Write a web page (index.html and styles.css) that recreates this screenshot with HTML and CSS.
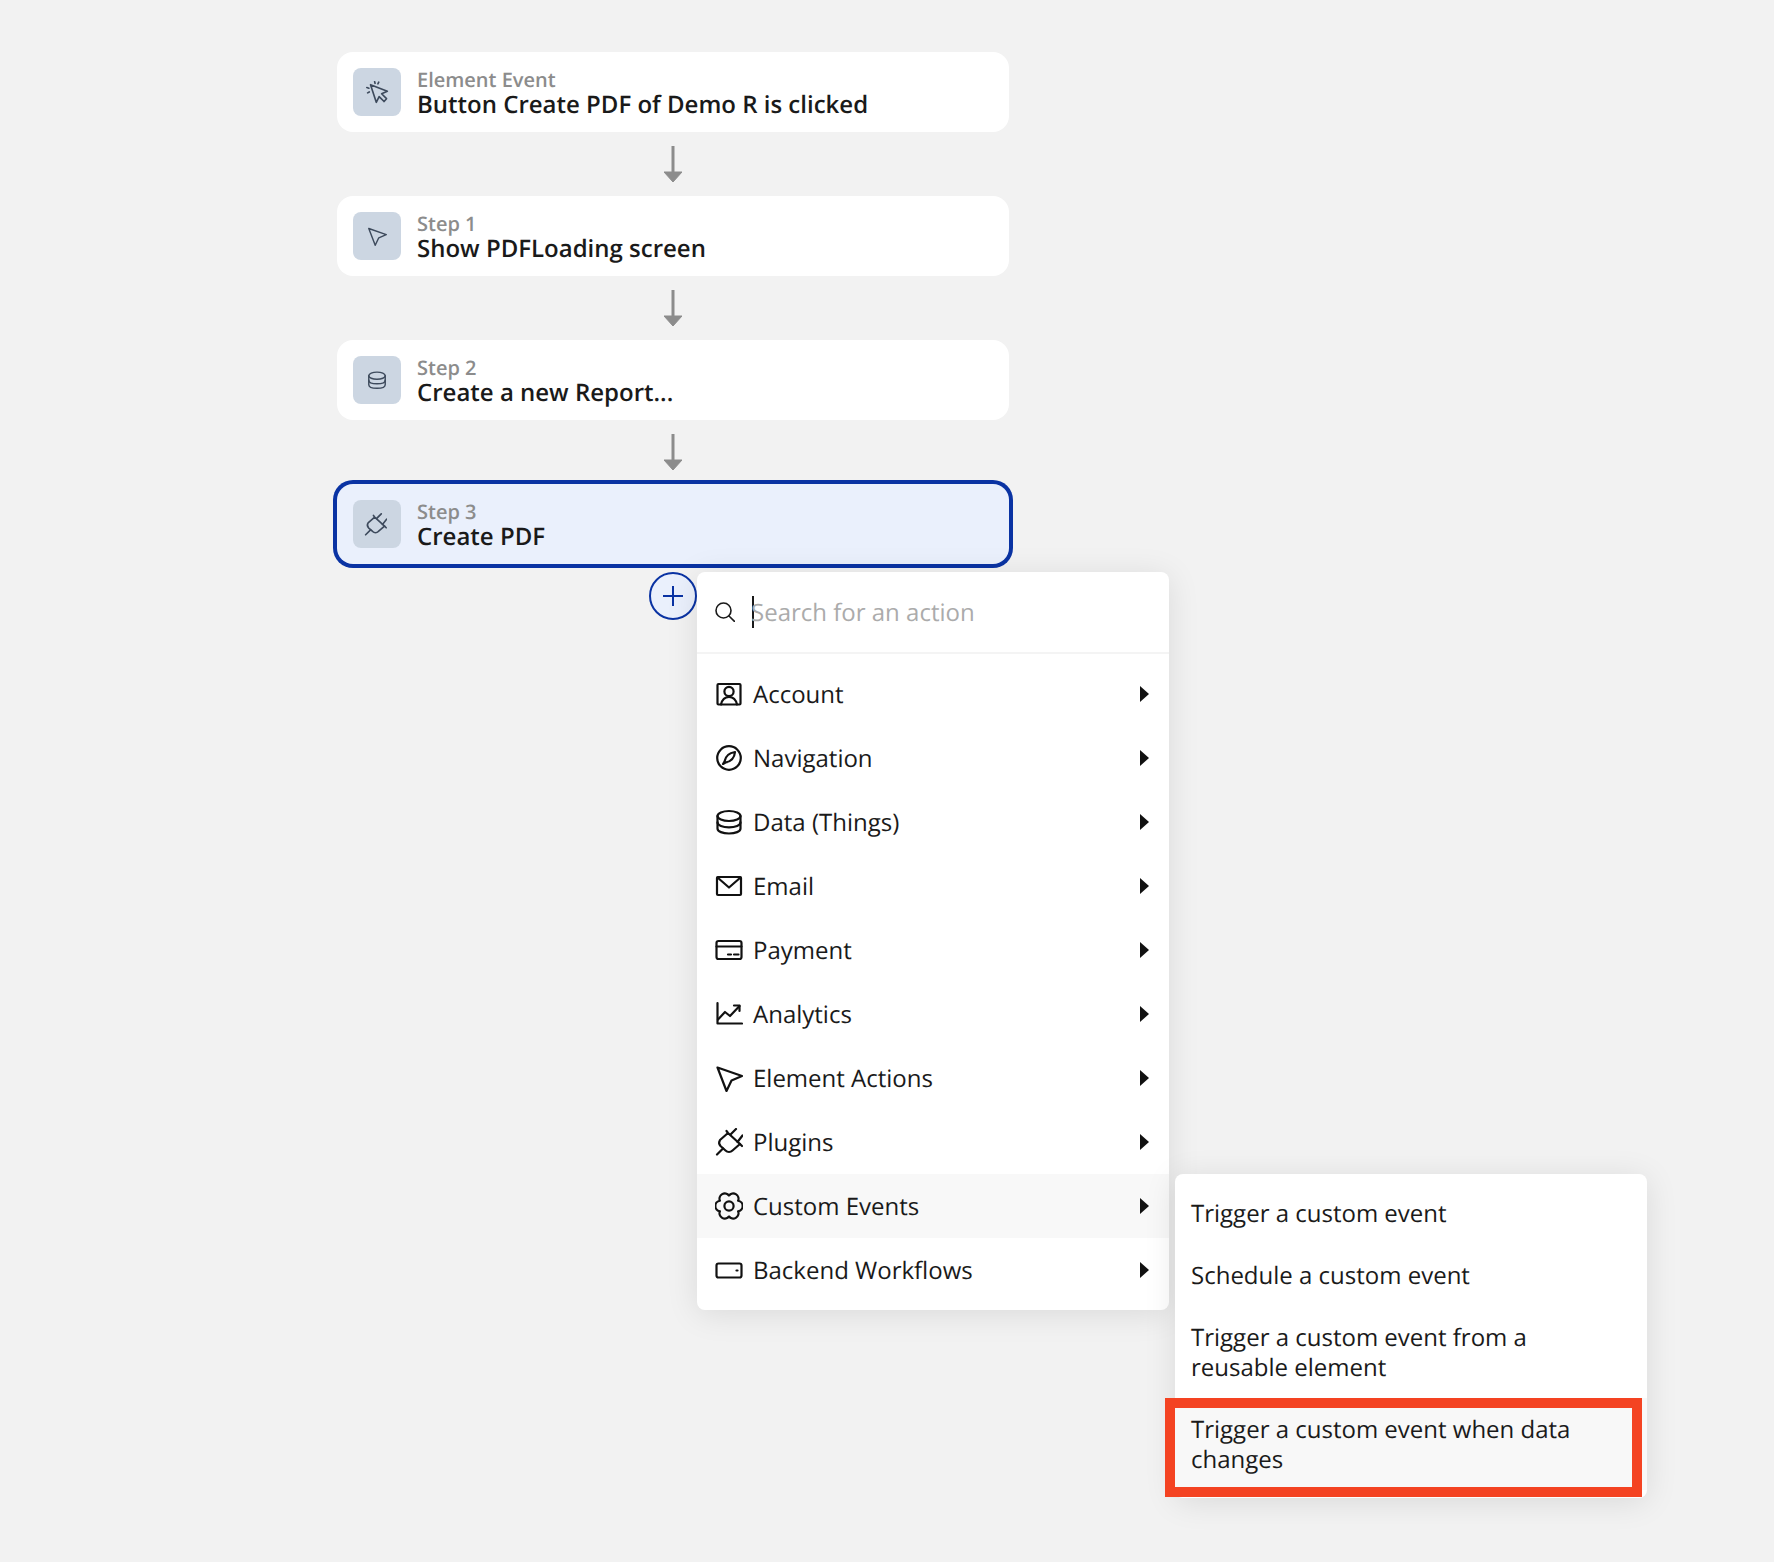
FILE: index.html
```html
<!DOCTYPE html>
<html lang="en">
<head>
<meta charset="utf-8">
<title>Workflow</title>
<link rel="stylesheet" href="styles.css">
</head>
<body>
<svg class="sprite" xmlns="http://www.w3.org/2000/svg">
  <symbol id="i-account" viewBox="0 0 28 28"><rect x="2.500" y="4" width="23" height="20.500" rx="1"/><circle cx="14" cy="11.500" r="4.600"/><path d="M6 24.500c1-4.500 4-7.500 8-7.500s7 3 8 7.500"/></symbol>
  <symbol id="i-nav" viewBox="0 0 28 28"><circle cx="14" cy="14" r="11.800"/><path d="M20 8c-5.500.8-9.500 4-10.500 9.500L8 20l2.500-1.500C16 17.500 19.500 13.500 20 8z"/></symbol>
  <symbol id="i-data" viewBox="0 0 28 28"><ellipse cx="14" cy="8" rx="11.500" ry="5"/><path d="M2.500 8v12.500c0 3 5.200 5 11.500 5s11.500-2 11.500-5V8"/><path d="M2.500 14.300c0 3 5.200 5 11.500 5s11.500-2 11.500-5"/></symbol>
  <symbol id="i-mail" viewBox="0 0 28 28"><rect x="2" y="5" width="24" height="18" rx="1"/><path d="M2.500 5.500L14 15.500 25.500 5.500"/></symbol>
  <symbol id="i-card" viewBox="0 0 28 28"><rect x="1.500" y="5" width="25" height="18" rx="2"/><path d="M1.500 10.500h25M13 18.500h3M19 18.500h4.500"/></symbol>
  <symbol id="i-chart" viewBox="0 0 28 28"><path d="M2.500 3v20.500H27"/><path d="M3 19.500l7-7.500 5 4 9.500-10"/><path d="M19 5.500h5.500V11"/></symbol>
  <symbol id="i-pointer" viewBox="0 0 28 28"><path d="M2.500 3.500L27 12l-10.500 4.500L11.500 27z"/></symbol>
  <symbol id="i-plug" viewBox="0 0 28 28"><path d="M11.500 3L13 5 25 16l-7.500 6.500a5 5 0 0 1-7 0L5.500 18a5 5 0 0 1-.5-6L13 5"/><path d="M15.500 6.500L21 1M22.500 14L27.500 7.500M25 16l2 2M8 20.500L2 26.500"/></symbol>
  <symbol id="i-gear" viewBox="0 0 28 28"><path d="M14 3.500A5.300 5.300 0 0 1 23.100 8.750 5.300 5.300 0 0 1 23.100 19.250 5.300 5.300 0 0 1 14 24.500 5.300 5.300 0 0 1 4.900 19.250 5.300 5.300 0 0 1 4.900 8.750 5.300 5.300 0 0 1 14 3.500z"/><circle cx="14" cy="14" r="4.600"/></symbol>
  <symbol id="i-backend" viewBox="0 0 28 28"><rect x="1.500" y="7.500" width="25" height="14" rx="2"/><path d="M21.500 14.500h1"/></symbol>
  <symbol id="i-click" viewBox="0 0 28 28"><path d="M5.500 4.500L26 12.500l-7 3 6 6-3 3.500-6-6L12.500 26z"/><path d="M10.500 .8l.5 2M15.500 1.500l-1 2M1 8l2.500.8M2 14.500l2-1.200"/></symbol>
</svg>

<main class="flow">
  <section class="card">
    <div class="tile"><svg class="tile-icon tile-icon-lg"><use href="#i-click"/></svg></div>
    <div class="card-text"><div class="card-label">Element Event</div><div class="card-title">Button Create PDF of Demo R is clicked</div></div>
  </section>
  <div class="connector"><svg class="arrow" viewBox="0 0 18 36"><path class="arrow-line" d="M9 0v28"/><path class="arrow-head" d="M0 26h18l-9 10z"/></svg></div>
  <section class="card">
    <div class="tile"><svg class="tile-icon"><use href="#i-pointer"/></svg></div>
    <div class="card-text"><div class="card-label">Step 1</div><div class="card-title">Show PDFLoading screen</div></div>
  </section>
  <div class="connector"><svg class="arrow" viewBox="0 0 18 36"><path class="arrow-line" d="M9 0v28"/><path class="arrow-head" d="M0 26h18l-9 10z"/></svg></div>
  <section class="card">
    <div class="tile"><svg class="tile-icon"><use href="#i-data"/></svg></div>
    <div class="card-text"><div class="card-label">Step 2</div><div class="card-title">Create a new Report...</div></div>
  </section>
  <div class="connector"><svg class="arrow" viewBox="0 0 18 36"><path class="arrow-line" d="M9 0v28"/><path class="arrow-head" d="M0 26h18l-9 10z"/></svg></div>
  <section class="card card-selected">
    <div class="tile"><svg class="tile-icon tile-icon-lg tile-icon-plug"><use href="#i-plug"/></svg></div>
    <div class="card-text"><div class="card-label">Step 3</div><div class="card-title">Create PDF</div></div>
  </section>
  <div class="add-row">
    <div class="add-button"><svg class="add-icon" viewBox="0 0 20 20"><path d="M10 0v20M0 10h20"/></svg></div>
  </div>
</main>

<div class="menu">
  <div class="search">
    <svg class="search-icon" viewBox="0 0 20 20"><circle cx="8.500" cy="8.500" r="7.500"/><path d="M14 14L19.500 19.500"/></svg>
    <span class="caret"></span>
    <span class="placeholder">Search for an action</span>
  </div>
  <ul class="menu-list">
    <li class="menu-item"><svg class="menu-icon"><use href="#i-account"/></svg><span class="menu-text">Account</span><span class="tri"></span></li>
    <li class="menu-item"><svg class="menu-icon"><use href="#i-nav"/></svg><span class="menu-text">Navigation</span><span class="tri"></span></li>
    <li class="menu-item"><svg class="menu-icon"><use href="#i-data"/></svg><span class="menu-text">Data (Things)</span><span class="tri"></span></li>
    <li class="menu-item"><svg class="menu-icon"><use href="#i-mail"/></svg><span class="menu-text">Email</span><span class="tri"></span></li>
    <li class="menu-item"><svg class="menu-icon"><use href="#i-card"/></svg><span class="menu-text">Payment</span><span class="tri"></span></li>
    <li class="menu-item"><svg class="menu-icon"><use href="#i-chart"/></svg><span class="menu-text">Analytics</span><span class="tri"></span></li>
    <li class="menu-item"><svg class="menu-icon"><use href="#i-pointer"/></svg><span class="menu-text">Element Actions</span><span class="tri"></span></li>
    <li class="menu-item"><svg class="menu-icon"><use href="#i-plug"/></svg><span class="menu-text">Plugins</span><span class="tri"></span></li>
    <li class="menu-item menu-item-active"><svg class="menu-icon"><use href="#i-gear"/></svg><span class="menu-text">Custom Events</span><span class="tri"></span></li>
    <li class="menu-item"><svg class="menu-icon"><use href="#i-backend"/></svg><span class="menu-text">Backend Workflows</span><span class="tri"></span></li>
  </ul>
</div>

<ul class="submenu">
  <li class="sub-item">Trigger a custom event</li>
  <li class="sub-item">Schedule a custom event</li>
  <li class="sub-item">Trigger a custom event from a reusable element</li>
  <li class="sub-item sub-item-marked">Trigger a custom event when data changes<span class="marker"></span></li>
</ul>
</body>
</html>
```
FILE: styles.css
```css
* { box-sizing: border-box; }
html, body { margin: 0; padding: 0; }
body {
  position: relative;
  width: 1774px;
  height: 1562px;
  overflow: hidden;
  background: #f2f2f2;
  font-family: "Open Sans", "Noto Sans", sans-serif;
  color: #1a1a1a;
  text-rendering: geometricPrecision;
}
.sprite { display: none; }

.flow {
  width: 672px;
  margin-left: 337px;
  padding-top: 52px;
  display: flex;
  flex-direction: column;
}
.card {
  height: 80px;
  padding: 16px;
  display: flex;
  align-items: center;
  gap: 16px;
  background: #fff;
  border-radius: 16px;
}
.card-selected {
  background: #eaf0fc;
  box-shadow: 0 0 0 4px #0a33a3;
}
.tile {
  width: 48px;
  height: 48px;
  flex: none;
  display: flex;
  align-items: center;
  justify-content: center;
  background: #ccd6e2;
  border-radius: 8px;
}
.tile-icon {
  width: 20px;
  height: 20px;
  fill: none;
  stroke: #3d4a5c;
  stroke-width: 2;
  stroke-linecap: round;
  stroke-linejoin: round;
}
.tile-icon-lg { width: 23px; height: 23px; }
.tile-icon-plug { margin-right: 3px; }
.card-text { display: flex; flex-direction: column; }
.card-label {
  font-size: 20px;
  line-height: 25px;
  font-weight: 600;
  color: #8c8c8c;
}
.card-title {
  font-size: 24px;
  line-height: 25px;
  font-weight: 600;
  color: #1a1a1a;
}
.connector {
  height: 64px;
  padding-top: 14px;
  display: flex;
  justify-content: center;
}
.arrow { width: 18px; height: 36px; }
.arrow-line { fill: none; stroke: #8c8c8c; stroke-width: 3; }
.arrow-head { fill: #8c8c8c; stroke: #8c8c8c; stroke-width: 1; stroke-linejoin: round; }

.add-row {
  padding-top: 8px;
  display: flex;
  justify-content: center;
}
.add-button {
  width: 48px;
  height: 48px;
  display: flex;
  align-items: center;
  justify-content: center;
  background: #eaf0fc;
  border: 2px solid #0a33a3;
  border-radius: 50%;
}
.add-icon { width: 20px; height: 20px; fill: none; stroke: #0a33a3; stroke-width: 2; }

.menu {
  position: absolute;
  left: 697px;
  top: 572px;
  width: 472px;
  height: 738px;
  background: #fff;
  border-radius: 8px;
  box-shadow: 0 4px 32px rgba(0, 0, 0, 0.1);
}
.search {
  height: 82px;
  padding: 0 18px;
  display: flex;
  align-items: center;
  border-bottom: 2px solid #f4f4f4;
}
.search-icon {
  width: 20px;
  height: 20px;
  flex: none;
  fill: none;
  stroke: #1a1a1a;
  stroke-width: 1.600;
  stroke-linecap: round;
}
.caret {
  width: 2px;
  height: 32px;
  margin-left: 17px;
  margin-right: -3px;
  flex: none;
  background: #1a1a1a;
}
.placeholder {
  margin-top: 2px;
  font-size: 24px;
  line-height: 32px;
  color: #ababab;
}
.menu-list { list-style: none; margin: 0; padding: 8px 0; }
.menu-item {
  height: 64px;
  padding: 0 19px 0 18px;
  display: flex;
  align-items: center;
}
.menu-item-active { background: #f8f8f8; }
.menu-icon {
  width: 28px;
  height: 28px;
  flex: none;
  fill: none;
  stroke: #111;
  stroke-width: 2.200;
  stroke-linecap: round;
  stroke-linejoin: round;
}
.menu-text {
  margin-left: 10px;
  margin-top: 2px;
  flex: 1;
  font-size: 24px;
  line-height: 30px;
  color: #1a1a1a;
}
.tri {
  width: 0;
  height: 0;
  flex: none;
  border-left: 9px solid #111;
  border-top: 8px solid transparent;
  border-bottom: 8px solid transparent;
  margin-right: 1px;
}

.submenu {
  position: absolute;
  left: 1175px;
  top: 1174px;
  width: 472px;
  margin: 0;
  padding: 8px 0;
  list-style: none;
  background: #fff;
  border-radius: 8px;
  box-shadow: 0 4px 32px rgba(0, 0, 0, 0.1);
}
.sub-item {
  position: relative;
  padding: 17px 40px 15px 16px;
  font-size: 24px;
  line-height: 30px;
  color: #1a1a1a;
}
.sub-item-marked { background: #f8f8f8; }
.marker {
  position: absolute;
  left: -10px;
  top: 0;
  width: 477px;
  height: 99px;
  border: 10px solid #f44322;
}
```
